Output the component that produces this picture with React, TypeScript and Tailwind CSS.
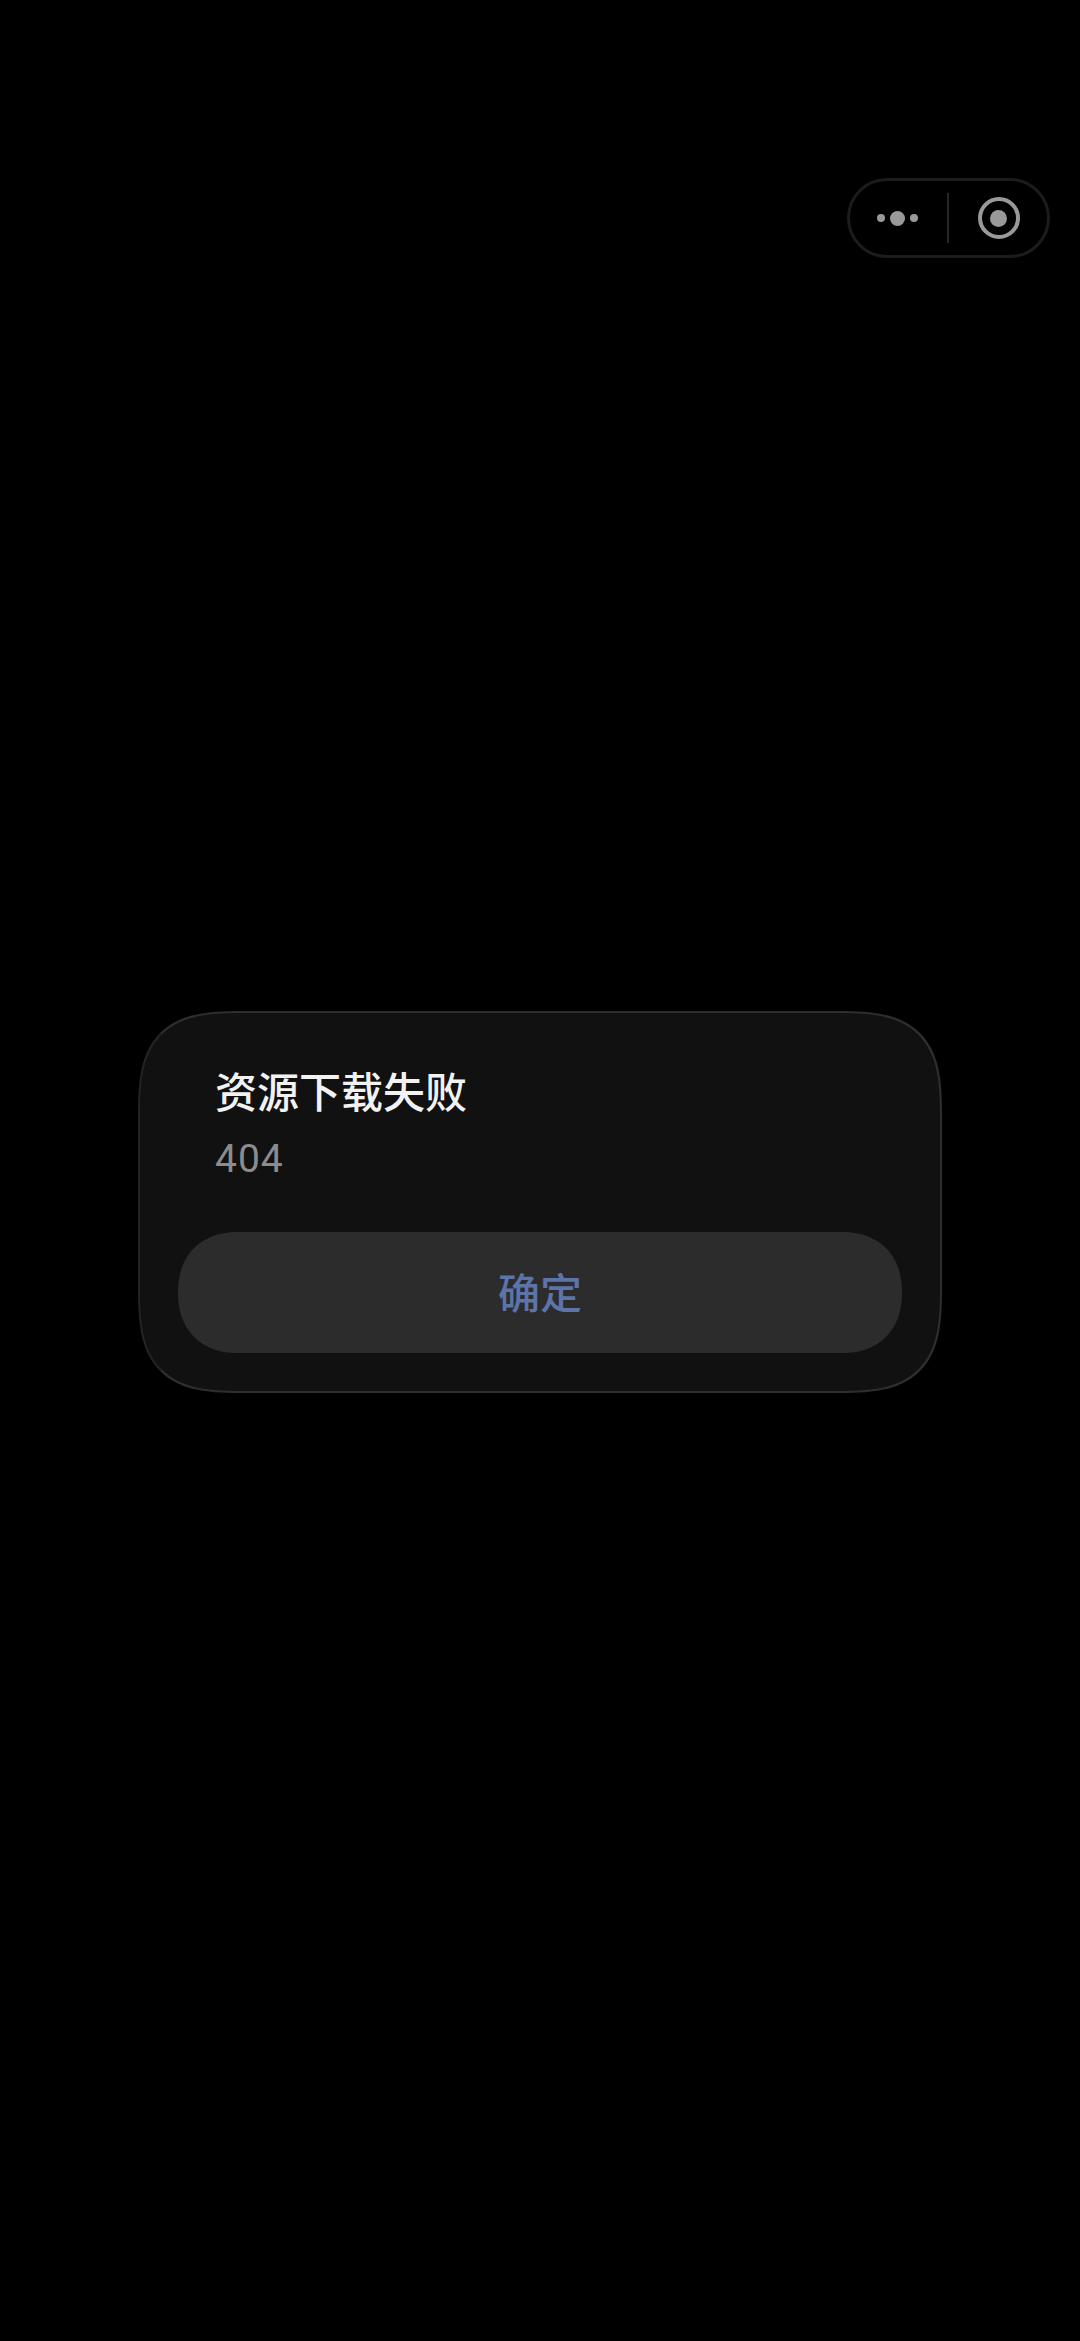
export default function App() {
  return (
    <div className="w-[1080px] h-[2341px] bg-black overflow-hidden flex flex-col font-['Roboto','Noto_Sans_CJK_SC',sans-serif]">
      <div className="flex justify-end pt-[178px] pr-[30px]">
        <div className="w-[203px] h-[80px] rounded-[40px] border-[3px] border-[#1c1c1c] flex items-center">
          <div className="w-[97px] flex justify-center items-center gap-[5px] pr-[2px]">
            <span className="w-[8px] h-[8px] rounded-full bg-[#999999]" />
            <span className="w-[15px] h-[15px] rounded-full bg-[#999999]" />
            <span className="w-[8px] h-[8px] rounded-full bg-[#999999]" />
          </div>
          <div className="w-[2px] h-[50px] bg-[#262626]" />
          <div className="flex-1 flex justify-center items-center pl-[1px]">
            <div className="w-[42px] h-[42px] rounded-full border-[4px] border-[#999999] flex items-center justify-center">
              <span className="w-[17px] h-[17px] rounded-full bg-[#999999]" />
            </div>
          </div>
        </div>
      </div>
      <div className="mt-[753px] ml-[138px] w-[804px] h-[382px] rounded-[108px] [corner-shape:superellipse(1.6)] bg-[#111111] border-2 border-[#2e2e2e] border-l-[#232323] flex flex-col">
        <div className="pl-[75px] pt-[56px] text-[42px] leading-[50px] font-medium text-[#f2f2f2]">资源下载失败</div>
        <div className="pl-[75px] pt-[17px] text-[39px] leading-[46px] text-[#8c8c8c] tracking-[1px]">404</div>
        <button className="mt-[50px] mx-[38px] h-[121px] rounded-[60px] [corner-shape:superellipse(1.15)] bg-[#2c2c2c] text-[42px] font-medium text-[#5d74a8] flex items-center justify-center">
          <span className="relative top-[2px]">确定</span>
        </button>
      </div>
    </div>
  );
}
